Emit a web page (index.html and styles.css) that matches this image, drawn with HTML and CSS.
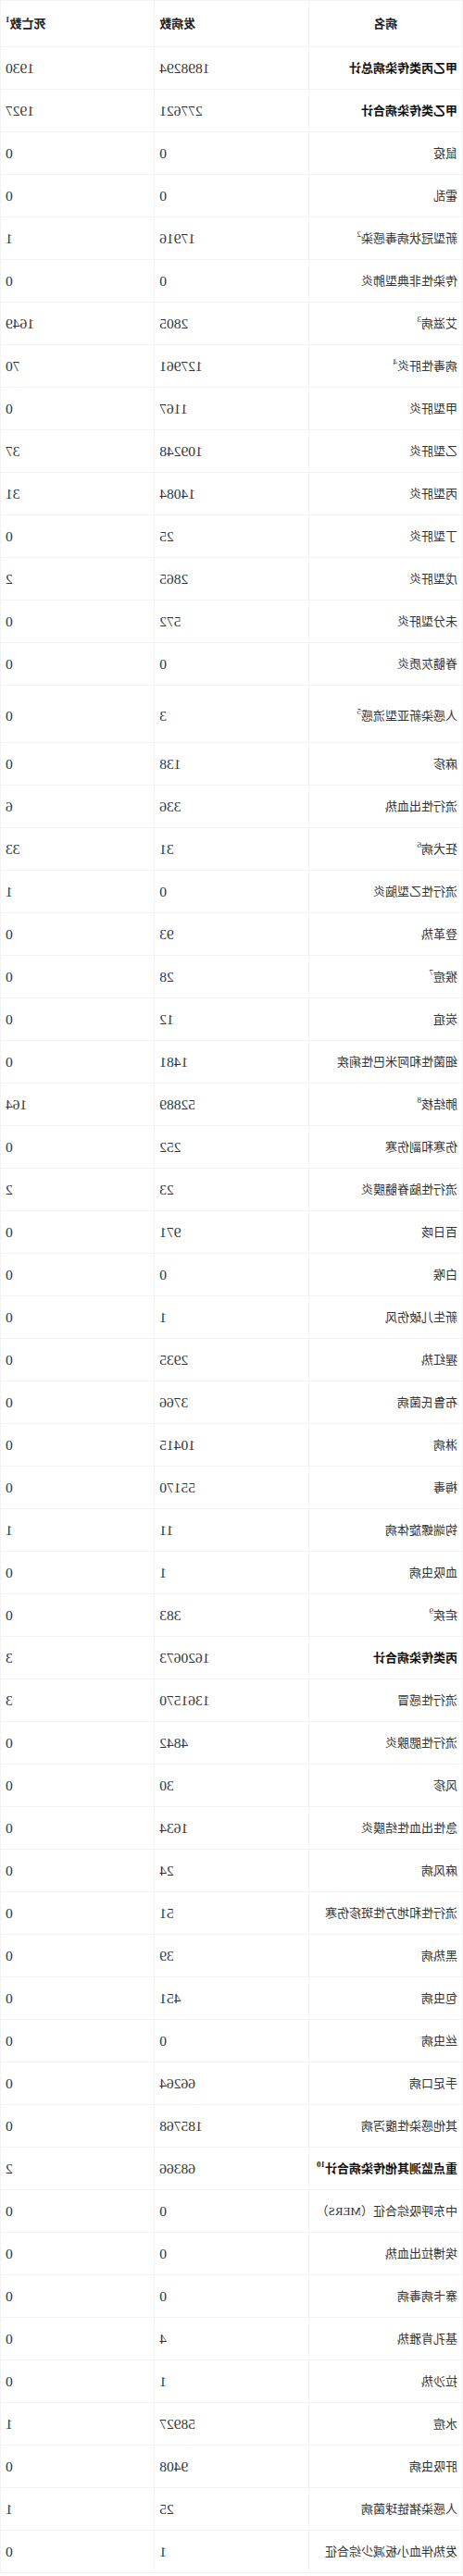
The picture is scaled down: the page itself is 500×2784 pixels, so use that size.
FILE: index.html
```html
<!DOCTYPE html>
<html lang="zh-CN">
<head>
<meta charset="utf-8">
<title>法定传染病疫情概况</title>
<link rel="stylesheet" href="styles.css">
</head>
<body>
<div class="page">
<table class="stats">
<thead>
<tr><th class="c-name">病名</th><th class="c-num">发病数</th><th class="c-num">死亡数<sup>1</sup></th></tr>
</thead>
<tbody>
<tr class="total"><td class="name">甲乙丙类传染病总计</td><td class="num">1898294</td><td class="num">1930</td></tr>
<tr class="total"><td class="name">甲乙类传染病合计</td><td class="num">277621</td><td class="num">1927</td></tr>
<tr><td class="name">鼠疫</td><td class="num">0</td><td class="num">0</td></tr>
<tr><td class="name">霍乱</td><td class="num">0</td><td class="num">0</td></tr>
<tr><td class="name">新型冠状病毒感染<sup>2</sup></td><td class="num">17916</td><td class="num">1</td></tr>
<tr><td class="name">传染性非典型肺炎</td><td class="num">0</td><td class="num">0</td></tr>
<tr><td class="name">艾滋病<sup>3</sup></td><td class="num">2805</td><td class="num">1649</td></tr>
<tr><td class="name">病毒性肝炎<sup>4</sup></td><td class="num">127961</td><td class="num">70</td></tr>
<tr><td class="name">甲型肝炎</td><td class="num">1167</td><td class="num">0</td></tr>
<tr><td class="name">乙型肝炎</td><td class="num">109248</td><td class="num">37</td></tr>
<tr><td class="name">丙型肝炎</td><td class="num">14084</td><td class="num">31</td></tr>
<tr><td class="name">丁型肝炎</td><td class="num">25</td><td class="num">0</td></tr>
<tr><td class="name">戊型肝炎</td><td class="num">2865</td><td class="num">2</td></tr>
<tr><td class="name">未分型肝炎</td><td class="num">572</td><td class="num">0</td></tr>
<tr><td class="name">脊髓灰质炎</td><td class="num">0</td><td class="num">0</td></tr>
<tr class="tall"><td class="name">人感染新亚型流感<sup>5</sup></td><td class="num">3</td><td class="num">0</td></tr>
<tr><td class="name">麻疹</td><td class="num">138</td><td class="num">0</td></tr>
<tr><td class="name">流行性出血热</td><td class="num">336</td><td class="num">6</td></tr>
<tr><td class="name">狂犬病<sup>6</sup></td><td class="num">31</td><td class="num">33</td></tr>
<tr><td class="name">流行性乙型脑炎</td><td class="num">0</td><td class="num">1</td></tr>
<tr><td class="name">登革热</td><td class="num">93</td><td class="num">0</td></tr>
<tr><td class="name">猴痘<sup>7</sup></td><td class="num">28</td><td class="num">0</td></tr>
<tr><td class="name">炭疽</td><td class="num">12</td><td class="num">0</td></tr>
<tr><td class="name">细菌性和阿米巴性痢疾</td><td class="num">1481</td><td class="num">0</td></tr>
<tr><td class="name">肺结核<sup>8</sup></td><td class="num">52889</td><td class="num">164</td></tr>
<tr><td class="name">伤寒和副伤寒</td><td class="num">252</td><td class="num">0</td></tr>
<tr><td class="name">流行性脑脊髓膜炎</td><td class="num">23</td><td class="num">2</td></tr>
<tr><td class="name">百日咳</td><td class="num">971</td><td class="num">0</td></tr>
<tr><td class="name">白喉</td><td class="num">0</td><td class="num">0</td></tr>
<tr><td class="name">新生儿破伤风</td><td class="num">1</td><td class="num">0</td></tr>
<tr><td class="name">猩红热</td><td class="num">2935</td><td class="num">0</td></tr>
<tr><td class="name">布鲁氏菌病</td><td class="num">3766</td><td class="num">0</td></tr>
<tr><td class="name">淋病</td><td class="num">10415</td><td class="num">0</td></tr>
<tr><td class="name">梅毒</td><td class="num">55170</td><td class="num">0</td></tr>
<tr><td class="name">钩端螺旋体病</td><td class="num">11</td><td class="num">1</td></tr>
<tr><td class="name">血吸虫病</td><td class="num">1</td><td class="num">0</td></tr>
<tr><td class="name">疟疾<sup>9</sup></td><td class="num">383</td><td class="num">0</td></tr>
<tr class="total"><td class="name">丙类传染病合计</td><td class="num">1620673</td><td class="num">3</td></tr>
<tr><td class="name">流行性感冒</td><td class="num">1361570</td><td class="num">3</td></tr>
<tr><td class="name">流行性腮腺炎</td><td class="num">4842</td><td class="num">0</td></tr>
<tr><td class="name">风疹</td><td class="num">30</td><td class="num">0</td></tr>
<tr><td class="name">急性出血性结膜炎</td><td class="num">1634</td><td class="num">0</td></tr>
<tr><td class="name">麻风病</td><td class="num">24</td><td class="num">0</td></tr>
<tr><td class="name">流行性和地方性斑疹伤寒</td><td class="num">51</td><td class="num">0</td></tr>
<tr><td class="name">黑热病</td><td class="num">39</td><td class="num">0</td></tr>
<tr><td class="name">包虫病</td><td class="num">451</td><td class="num">0</td></tr>
<tr><td class="name">丝虫病</td><td class="num">0</td><td class="num">0</td></tr>
<tr><td class="name">手足口病</td><td class="num">66264</td><td class="num">0</td></tr>
<tr><td class="name">其他感染性腹泻病</td><td class="num">185768</td><td class="num">0</td></tr>
<tr class="total"><td class="name">重点监测其他传染病合计<sup>10</sup></td><td class="num">68366</td><td class="num">2</td></tr>
<tr><td class="name">中东呼吸综合征（MERS）</td><td class="num">0</td><td class="num">0</td></tr>
<tr><td class="name">埃博拉出血热</td><td class="num">0</td><td class="num">0</td></tr>
<tr><td class="name">寨卡病毒病</td><td class="num">0</td><td class="num">0</td></tr>
<tr><td class="name">基孔肯雅热</td><td class="num">4</td><td class="num">0</td></tr>
<tr><td class="name">拉沙热</td><td class="num">1</td><td class="num">0</td></tr>
<tr><td class="name">水痘</td><td class="num">58927</td><td class="num">1</td></tr>
<tr><td class="name">肝吸虫病</td><td class="num">9408</td><td class="num">0</td></tr>
<tr><td class="name">人感染猪链球菌病</td><td class="num">25</td><td class="num">1</td></tr>
<tr><td class="name">发热伴血小板减少综合征</td><td class="num">1</td><td class="num">0</td></tr>
</tbody>
</table>
</div>
</body>
</html>
```
FILE: styles.css
```css
html, body {
  margin: 0;
  padding: 0;
  background: #ffffff;
}

.page {
  width: 500px;
  transform: scaleX(-1);
  transform-origin: center top;
}

.stats {
  width: 500px;
  border-collapse: collapse;
  table-layout: fixed;
  color: #333333;
}

.stats th,
.stats td {
  width: 33.333%;
  border: 1px solid #f3f3f3;
  padding: 12px 5px;
  line-height: 21px;
  vertical-align: middle;
}

.stats thead th {
  padding: 14px 5px;
  font-family: "Liberation Serif", "Noto Sans CJK SC", serif;
  font-size: 13px;
  font-weight: bold;
  color: #222222;
}

.c-name {
  text-align: center;
}

.c-num {
  text-align: right;
}

.name {
  text-align: left;
  font-family: "Liberation Serif", "Noto Sans CJK SC", serif;
  font-size: 13px;
  white-space: nowrap;
}

.num {
  text-align: right;
  font-family: "Liberation Serif", "Noto Sans CJK SC", serif;
  font-size: 15.5px;
}

.total .name {
  font-weight: bold;
  color: #111111;
}

.tall td {
  padding-top: 22px;
  padding-bottom: 18px;
}

sup {
  font-size: 9px;
  line-height: 0;
  vertical-align: 6px;
}
```
